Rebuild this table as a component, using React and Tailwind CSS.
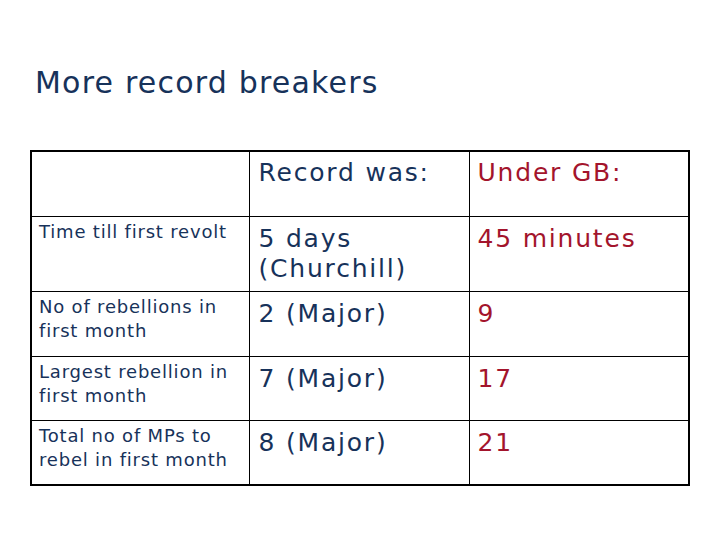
import React from "react";

const rows = [
  { label: "Time till first revolt", was: "5 days (Churchill)", gb: "45 minutes", h: "h-[75px]" },
  { label: "No of rebellions in first month", was: "2 (Major)", gb: "9", h: "h-[65px]" },
  { label: "Largest rebellion in first month", was: "7 (Major)", gb: "17", h: "h-[64px]" },
  { label: "Total no of MPs to rebel in first month", was: "8 (Major)", gb: "21", h: "h-[65px]" },
];

export default function App() {
  return (
    <div className="w-[720px] h-[540px] bg-white font-['DejaVu_Sans',sans-serif] text-[#17325a]">
      <div className="pt-[65px] pl-[35px]">
        <h1 className="text-[30px] leading-[36px] tracking-[1.2px]">More record breakers</h1>
      </div>
      <div className="pt-[49px] pl-[30px]">
        <table className="table-fixed border-collapse border-2 border-black w-[658px]">
          <colgroup>
            <col className="w-[218px]" />
            <col className="w-[220px]" />
            <col className="w-[220px]" />
          </colgroup>
          <tbody>
            <tr className="h-[65px]">
              <td className="border border-black align-top"></td>
              <td className="border border-black align-top px-[9px] pt-[6px] text-[25px] leading-[30px] tracking-[1.8px]">Record was:</td>
              <td className="border border-black align-top px-[8px] pt-[6px] text-[25px] leading-[30px] tracking-[1.8px] text-[#a3142c]">Under GB:</td>
            </tr>
            {rows.map((r) => (
              <tr key={r.label} className={r.h}>
                <td className="border border-black align-top px-[7px] pt-[3px] text-[18px] leading-[24px] tracking-[0.8px]">{r.label}</td>
                <td className="border border-black align-top px-[9px] pt-[7px] text-[25px] leading-[30px] tracking-[1.8px]">{r.was}</td>
                <td className="border border-black align-top px-[8px] pt-[7px] text-[25px] leading-[30px] tracking-[1.8px] text-[#a3142c]">{r.gb}</td>
              </tr>
            ))}
          </tbody>
        </table>
      </div>
    </div>
  );
}
